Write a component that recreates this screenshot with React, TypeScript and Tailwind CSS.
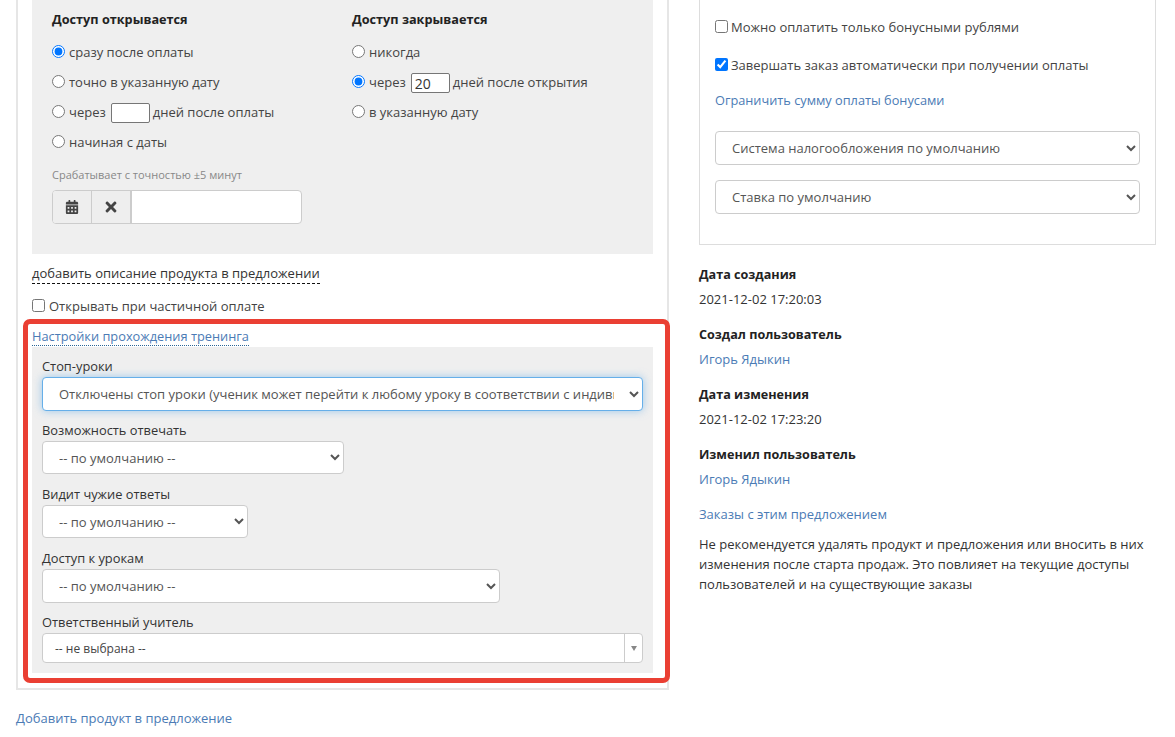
import React from 'react';
import { FaCalendarAlt, FaTimes } from 'react-icons/fa';

const Radio: React.FC<{ name: string; checked?: boolean; children: React.ReactNode }> = ({ name, checked, children }) => (
  <label className="flex h-[30px] items-center">
    <input type="radio" name={name} defaultChecked={checked} className="m-0 mr-[4px] mb-[3px] h-[13px] w-[13px]" />
    {children}
  </label>
);

const DaysInput: React.FC<{ value?: string }> = ({ value }) => (
  <input
    defaultValue={value}
    className="mr-[3px] ml-[5px] h-[20px] w-[39px] rounded-[2px] border border-[#767676] bg-white px-[3px] text-[14px] text-[#333]"
  />
);

const Select: React.FC<{ className: string; children: string }> = ({ className, children }) => (
  <select className={`block rounded-[4px] border border-[#ccc] bg-white px-[12px] text-[13px] text-[#555] ${className}`}>
    <option>{children}</option>
  </select>
);

const Label: React.FC<{ children: string }> = ({ children }) => (
  <div className="h-[20px] text-[12.85px] leading-[20px] text-[#333]">{children}</div>
);

const MetaBlock: React.FC<{ title: string; value: string; link?: boolean }> = ({ title, value, link }) => (
  <div className="mb-[15px]">
    <div className="h-[25px] pt-[1px] text-[12.6px] font-bold leading-[20px] text-[#222]">{title}</div>
    <div className={`h-[20px] leading-[20px] ${link ? 'text-[#4b7bb5]' : 'text-[#333]'}`}>{value}</div>
  </div>
);

export default function App() {
  return (
    <div className="relative flex h-[737px] w-[1175px] items-start overflow-hidden bg-white pl-[16px] font-['Open_Sans',sans-serif] text-[13px] text-[#444]">
      <div className="w-[683px] shrink-0">
        <div className="w-[653px] border-x-2 border-b-2 border-[#e6e6e6] px-[14px] pb-[15px]">
          <div className="flex h-[254px] bg-[#efefef] pl-[20px]">
            <div className="w-[300px]">
              <div className="pt-[9px] pb-[9px] text-[12.7px] leading-[20px] font-bold text-[#222]">Доступ открывается</div>
              <Radio name="open" checked>сразу после оплаты</Radio>
              <Radio name="open">точно в указанную дату</Radio>
              <Radio name="open">
                через <DaysInput /> дней после оплаты
              </Radio>
              <Radio name="open">начиная с даты</Radio>
              <div className="mt-[9px] h-[16px] text-[11px] leading-[16px] text-[#888]">Срабатывает с точностью ±5 минут</div>
              <div className="mt-[7px] flex h-[34px] w-[250px] overflow-hidden rounded-[4px] border border-[#ccc] bg-white">
                <div className="flex w-[39px] items-center justify-center border-r border-[#ccc] bg-[#eee]">
                  <FaCalendarAlt size={14} className="text-[#444]" />
                </div>
                <div className="flex w-[40px] items-center justify-center border-r-2 border-[#ccc] bg-[#eee]">
                  <FaTimes size={16} className="text-[#444]" />
                </div>
              </div>
            </div>
            <div>
              <div className="pt-[9px] pb-[9px] text-[12.7px] leading-[20px] font-bold text-[#222]">Доступ закрывается</div>
              <Radio name="close">никогда</Radio>
              <Radio name="close" checked>
                через <DaysInput value="20" /> дней после открытия
              </Radio>
              <Radio name="close">в указанную дату</Radio>
            </div>
          </div>

          <div className="mt-[9px] h-[20px]">
            <span className="border-b border-dashed border-[#111] pb-[1px] text-[13px] leading-[20px] text-[#333]">добавить описание продукта в предложении</span>
          </div>

          <label className="mt-[14px] flex h-[20px] items-center">
            <input type="checkbox" className="m-0 mr-[4px] mb-[3px] h-[13px] w-[13px]" />
            Открывать при частичной оплате
          </label>

          <div className="mt-[9px] h-[20px]">
            <span className="border-b border-dotted border-[#2a6496] text-[12.8px] leading-[20px] text-[#4b7bb5]">Настройки прохождения тренинга</span>
          </div>

          <div className="mt-[1px] h-[326px] bg-[#efefef] px-[10px] pt-[10px]">
            <div className="-mt-[1px] mb-[1px]"><Label>Стоп-уроки</Label></div>
            <select className="block h-[34px] w-[601px] rounded-[4px] border border-[#66afe9] bg-white px-[12px] text-[13px] text-[#555] shadow-[0_0_8px_rgba(102,175,233,0.6)]">
              <option>Отключены стоп уроки (ученик может перейти к любому уроку в соответствии с индивидуальным планом обучения)</option>
            </select>
            <div className="mt-[9px]"><Label>Возможность отвечать</Label></div>
            <Select className="mt-[1px] h-[33px] w-[302px]">-- по умолчанию --</Select>
            <div className="mt-[10px]"><Label>Видит чужие ответы</Label></div>
            <Select className="mt-[1px] h-[33px] w-[206px]">-- по умолчанию --</Select>
            <div className="mt-[10px]"><Label>Доступ к урокам</Label></div>
            <Select className="mt-[1px] h-[34px] w-[458px]">-- по умолчанию --</Select>
            <div className="mt-[9px]"><Label>Ответственный учитель</Label></div>
            <div className="mt-[1px] flex h-[30px] w-[601px] items-center rounded-[4px] border border-[#ccc] bg-white pl-[12px] text-[12px] text-[#444]">
              <span className="flex-1 pt-[1px]">-- не выбрана --</span>
              <div className="flex h-full w-[18px] items-center justify-center border-l border-[#ccc]">
                <div className="h-0 w-0 border-x-[3.5px] border-t-[5px] border-x-transparent border-t-[#888]" />
              </div>
            </div>
          </div>
        </div>
        <div className="mt-[18px] leading-[20px] text-[#4b7bb5]">Добавить продукт в предложение</div>
      </div>

      <div className="w-[457px] shrink-0">
        <div className="h-[245px] border-x border-b border-[#ddd] px-[15px]">
          <label className="flex h-[20px] translate-y-[18px] items-center text-[#444]">
            <input type="checkbox" className="m-0 mr-[3px] mb-[3px] h-[13px] w-[13px]" />
            Можно оплатить только бонусными рублями
          </label>
          <label className="mt-[18px] flex h-[20px] translate-y-[18px] items-center text-[#444]">
            <input type="checkbox" defaultChecked className="m-0 mr-[3px] mb-[3px] h-[13px] w-[13px]" />
            Завершать заказ автоматически при получении оплаты
          </label>
          <div className="mt-[32px] text-[12.75px] leading-[20px] text-[#4b7bb5]">Ограничить сумму оплаты бонусами</div>
          <Select className="mt-[21px] h-[34px] w-[425px]">Система налогообложения по умолчанию</Select>
          <Select className="mt-[15px] h-[34px] w-[425px]">Ставка по умолчанию</Select>
        </div>
        <div className="mt-[19px]">
          <MetaBlock title="Дата создания" value="2021-12-02 17:20:03" />
          <MetaBlock title="Создал пользователь" value="Игорь Ядыкин" link />
          <MetaBlock title="Дата изменения" value="2021-12-02 17:23:20" />
          <MetaBlock title="Изменил пользователь" value="Игорь Ядыкин" link />
          <div className="mb-[10px] leading-[20px] text-[#4b7bb5]">Заказы с этим предложением</div>
          <p className="leading-[20px] text-[#333]">
            Не рекомендуется удалять продукт и предложения или вносить в них изменения после старта продаж. Это повлияет на текущие доступы пользователей и на существующие заказы
          </p>
        </div>
      </div>

      {/* annotation frame drawn over the form */}
      <div className="pointer-events-none absolute top-[319px] left-[23px] h-[364px] w-[647px] rounded-[7px] border-[5px] border-[#ea3f33]" />
    </div>
  );
}
